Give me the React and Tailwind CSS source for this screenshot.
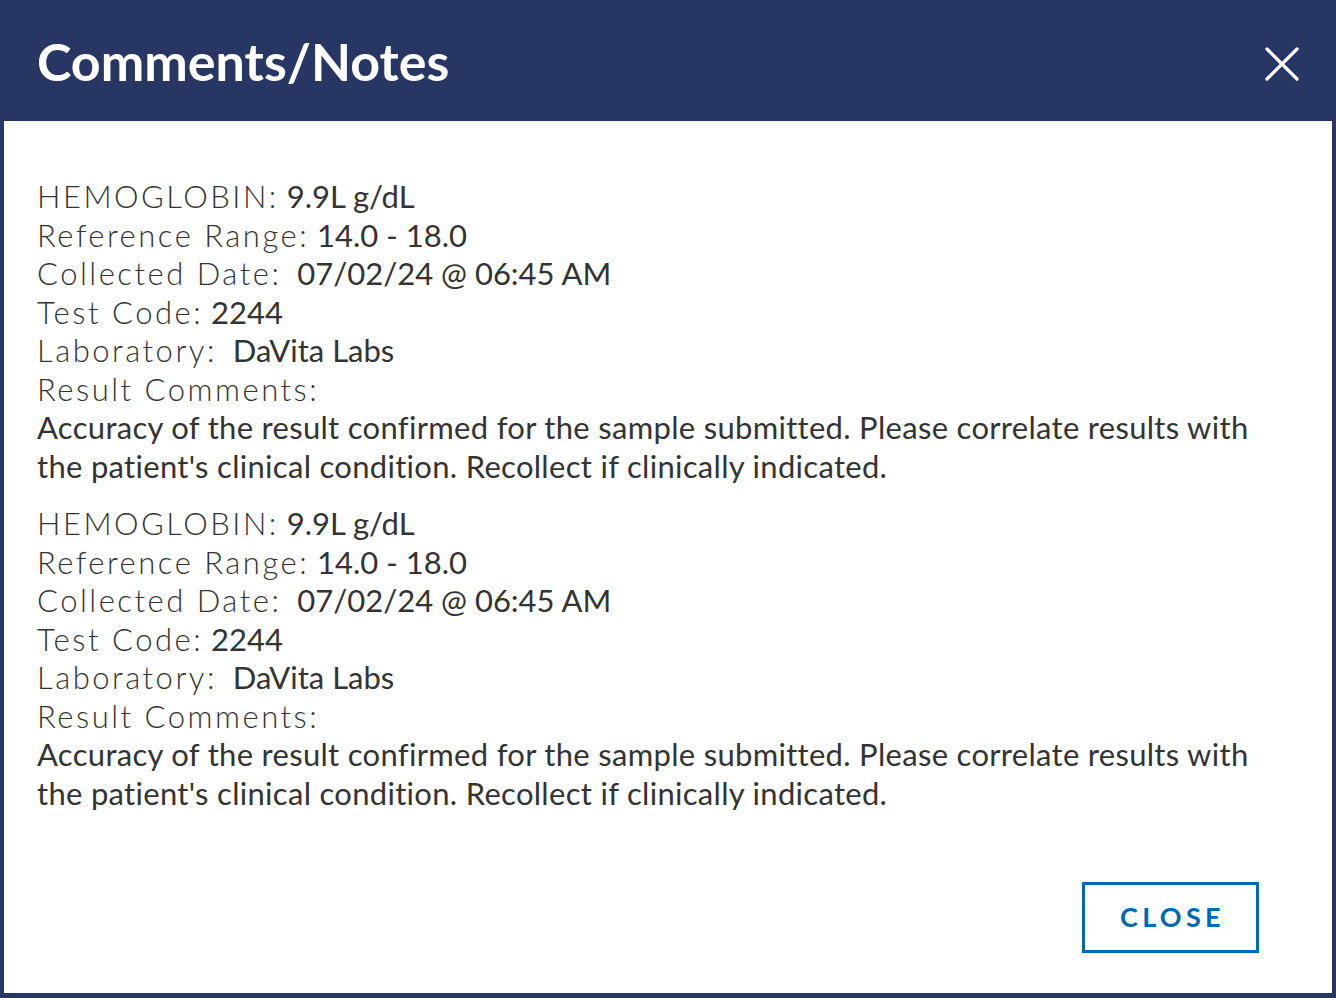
import React from "react";

const Row = ({ label, value, gap = "" }) => (
  <div className="leading-[38.5px]">
    <span className="font-light tracking-[2.5px]">{label}</span>
    <span className="font-normal">{gap}{value}</span>
  </div>
);

const Block = () => (
  <div className="text-[31px] text-[#333333]">
    <Row label="HEMOGLOBIN:" value="9.9L g/dL" gap=" " />
    <Row label="Reference Range:" value="14.0 - 18.0" gap=" " />
    <Row label="Collected Date:" value="07/02/24 @ 06:45 AM" gap={"\u00a0 "} />
    <Row label="Test Code:" value="2244" gap=" " />
    <Row label="Laboratory:" value="DaVita Labs" gap={"\u00a0 "} />
    <div className="leading-[38.5px] font-light tracking-[2.5px]">Result Comments:</div>
    <div className="leading-[38.5px] font-normal tracking-[0.3px]">
      Accuracy of the result confirmed for the sample submitted. Please correlate results with the patient's clinical condition. Recollect if clinically indicated.
    </div>
  </div>
);

export default function App() {
  return (
    <div
      className="w-[1336px] h-[998px] flex flex-col bg-white border-x-4 border-b-[5px] border-[#283663]"
      style={{ fontFamily: "Lato, 'Open Sans', sans-serif" }}
    >
      <div className="h-[121px] shrink-0 bg-[#283663] flex items-center justify-between pl-[33px] pr-[33px] -mx-1">
        <h1 className="text-white font-bold text-[52px] leading-none pl-1 pt-[1px]">Comments/Notes</h1>
        <button className="w-[40px] h-[40px] flex items-center justify-center mr-[1px] mt-[6px]">
          <svg width="34" height="34" viewBox="0 0 34 34" fill="none" stroke="white" strokeWidth="3.2" strokeLinecap="round">
            <path d="M2 2 L32 32 M32 2 L2 32" />
          </svg>
        </button>
      </div>
      <div className="flex-1 flex flex-col pl-[33px] pr-[60px] pt-[56px]">
        <Block />
        <div className="h-[19px]" />
        <Block />
        <div className="flex-1" />
        <div className="flex justify-end pr-[13px] pb-[40px]">
          <button className="w-[177px] h-[71px] border-[3px] border-[#0067b1] text-[#0067b1] font-bold text-[27px] tracking-[4.3px] pl-[4px] flex items-center justify-center">
            CLOSE
          </button>
        </div>
      </div>
    </div>
  );
}
